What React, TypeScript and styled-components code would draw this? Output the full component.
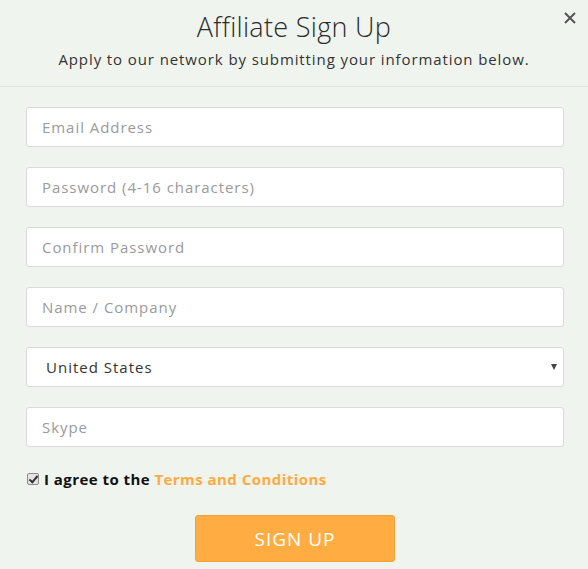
import React from "react";
import styled, { createGlobalStyle } from "styled-components";

const Global = createGlobalStyle`
  html, body { margin: 0; padding: 0; background: #f0f4ef; }
  * { box-sizing: border-box; }
`;

const Modal = styled.div`
  position: relative;
  width: 588px;
  height: 569px;
  background: #f0f4ef;
  font-family: "Open Sans", "Liberation Sans", sans-serif;
  overflow: hidden;
`;

const Header = styled.header`
  display: flex;
  flex-direction: column;
  align-items: center;
  padding-top: 9px;
  height: 87px;
  border-bottom: 1px solid #dde2dc;
`;

const Title = styled.h1`
  margin: 0;
  font-family: "Open Sans", "Liberation Sans", sans-serif;
  font-weight: 300;
  font-size: 27px;
  line-height: 36px;
  color: #2b2b2b;
  letter-spacing: 0.3px;
`;

const Subtitle = styled.p`
  margin: 4px 0 0;
  font-size: 15px;
  line-height: 20px;
  color: #333;
  letter-spacing: 0.9px;
`;

const Close = styled.button`
  position: absolute;
  top: 6px;
  right: 6px;
  width: 24px;
  height: 24px;
  border: 0;
  background: transparent;
  padding: 0;
  display: flex;
  align-items: center;
  justify-content: center;
  cursor: pointer;
`;

const Form = styled.form`
  display: flex;
  flex-direction: column;
  padding: 20px 24px 0 26px;
  gap: 20px;
`;

const Input = styled.input`
  width: 538px;
  height: 40px;
  border: 1px solid #dadada;
  border-radius: 3px;
  background: #fff;
  padding: 0 15px;
  font-family: "Open Sans", "Liberation Sans", sans-serif;
  font-size: 15px;
  color: #333;
  letter-spacing: 0.95px;
  outline: none;
  &::placeholder { color: #9a9a9a; }
`;

const SelectWrap = styled.div`
  position: relative;
  width: 538px;
  &::after {
    content: "";
    position: absolute;
    right: 7px;
    top: 17px;
    border-left: 3.5px solid transparent;
    border-right: 3.5px solid transparent;
    border-top: 6px solid #444;
    pointer-events: none;
  }
`;

const Select = styled.select`
  appearance: none;
  -webkit-appearance: none;
  width: 538px;
  height: 40px;
  border: 1px solid #dadada;
  border-radius: 3px;
  background: #fff;
  padding: 0 19px;
  font-family: "Open Sans", "Liberation Sans", sans-serif;
  font-size: 15px;
  color: #333;
  letter-spacing: 1px;
  outline: none;
`;

const AgreeRow = styled.label`
  display: flex;
  align-items: center;
  gap: 5px;
  margin-top: 2px;
  margin-left: 1px;
  font-size: 15px;
  font-weight: 700;
  color: #111;
  letter-spacing: 0.45px;
`;

const Check = styled.input`
  appearance: none;
  -webkit-appearance: none;
  position: relative;
  margin: 0;
  width: 12px;
  height: 12px;
  border: 1px solid #8a8a8a;
  border-radius: 2px;
  background: #e4e4e4;
  &:checked::after {
    content: "";
    position: absolute;
    left: 3px;
    top: 0px;
    width: 3px;
    height: 7px;
    border-right: 2px solid #333;
    border-bottom: 2px solid #333;
    transform: rotate(40deg);
  }
`;

const Link = styled.a`
  color: #ffab3f;
  text-decoration: none;
`;

const Submit = styled.button`
  align-self: center;
  margin-top: 6px;
  width: 200px;
  height: 47px;
  background: #ffad42;
  border: 1px solid #f5a234;
  border-radius: 3px;
  color: #fff;
  font-family: "Open Sans", "Liberation Sans", sans-serif;
  font-size: 19px;
  font-weight: 500;
  letter-spacing: 1px;
  cursor: pointer;
`;

export default function App() {
  return (
    <>
      <Global />
      <Modal>
        <Header>
          <Title>Affiliate Sign Up</Title>
          <Subtitle>Apply to our network by submitting your information below.</Subtitle>
        </Header>
        <Close aria-label="Close">
          <svg width="12" height="12" viewBox="0 0 12 12">
            <path d="M1 1L11 11M11 1L1 11" stroke="#555" strokeWidth="2" />
          </svg>
        </Close>
        <Form onSubmit={(e) => e.preventDefault()}>
          <Input type="email" placeholder="Email Address" />
          <Input type="password" placeholder="Password (4-16 characters)" />
          <Input type="password" placeholder="Confirm Password" />
          <Input type="text" placeholder="Name / Company" />
          <SelectWrap>
            <Select defaultValue="US">
              <option value="US">United States</option>
              <option value="CA">Canada</option>
              <option value="GB">United Kingdom</option>
            </Select>
          </SelectWrap>
          <Input type="text" placeholder="Skype" />
          <AgreeRow>
            <Check type="checkbox" defaultChecked />
            <span>
              I agree to the <Link href="#">Terms and Conditions</Link>
            </span>
          </AgreeRow>
          <Submit type="submit">SIGN UP</Submit>
        </Form>
      </Modal>
    </>
  );
}
